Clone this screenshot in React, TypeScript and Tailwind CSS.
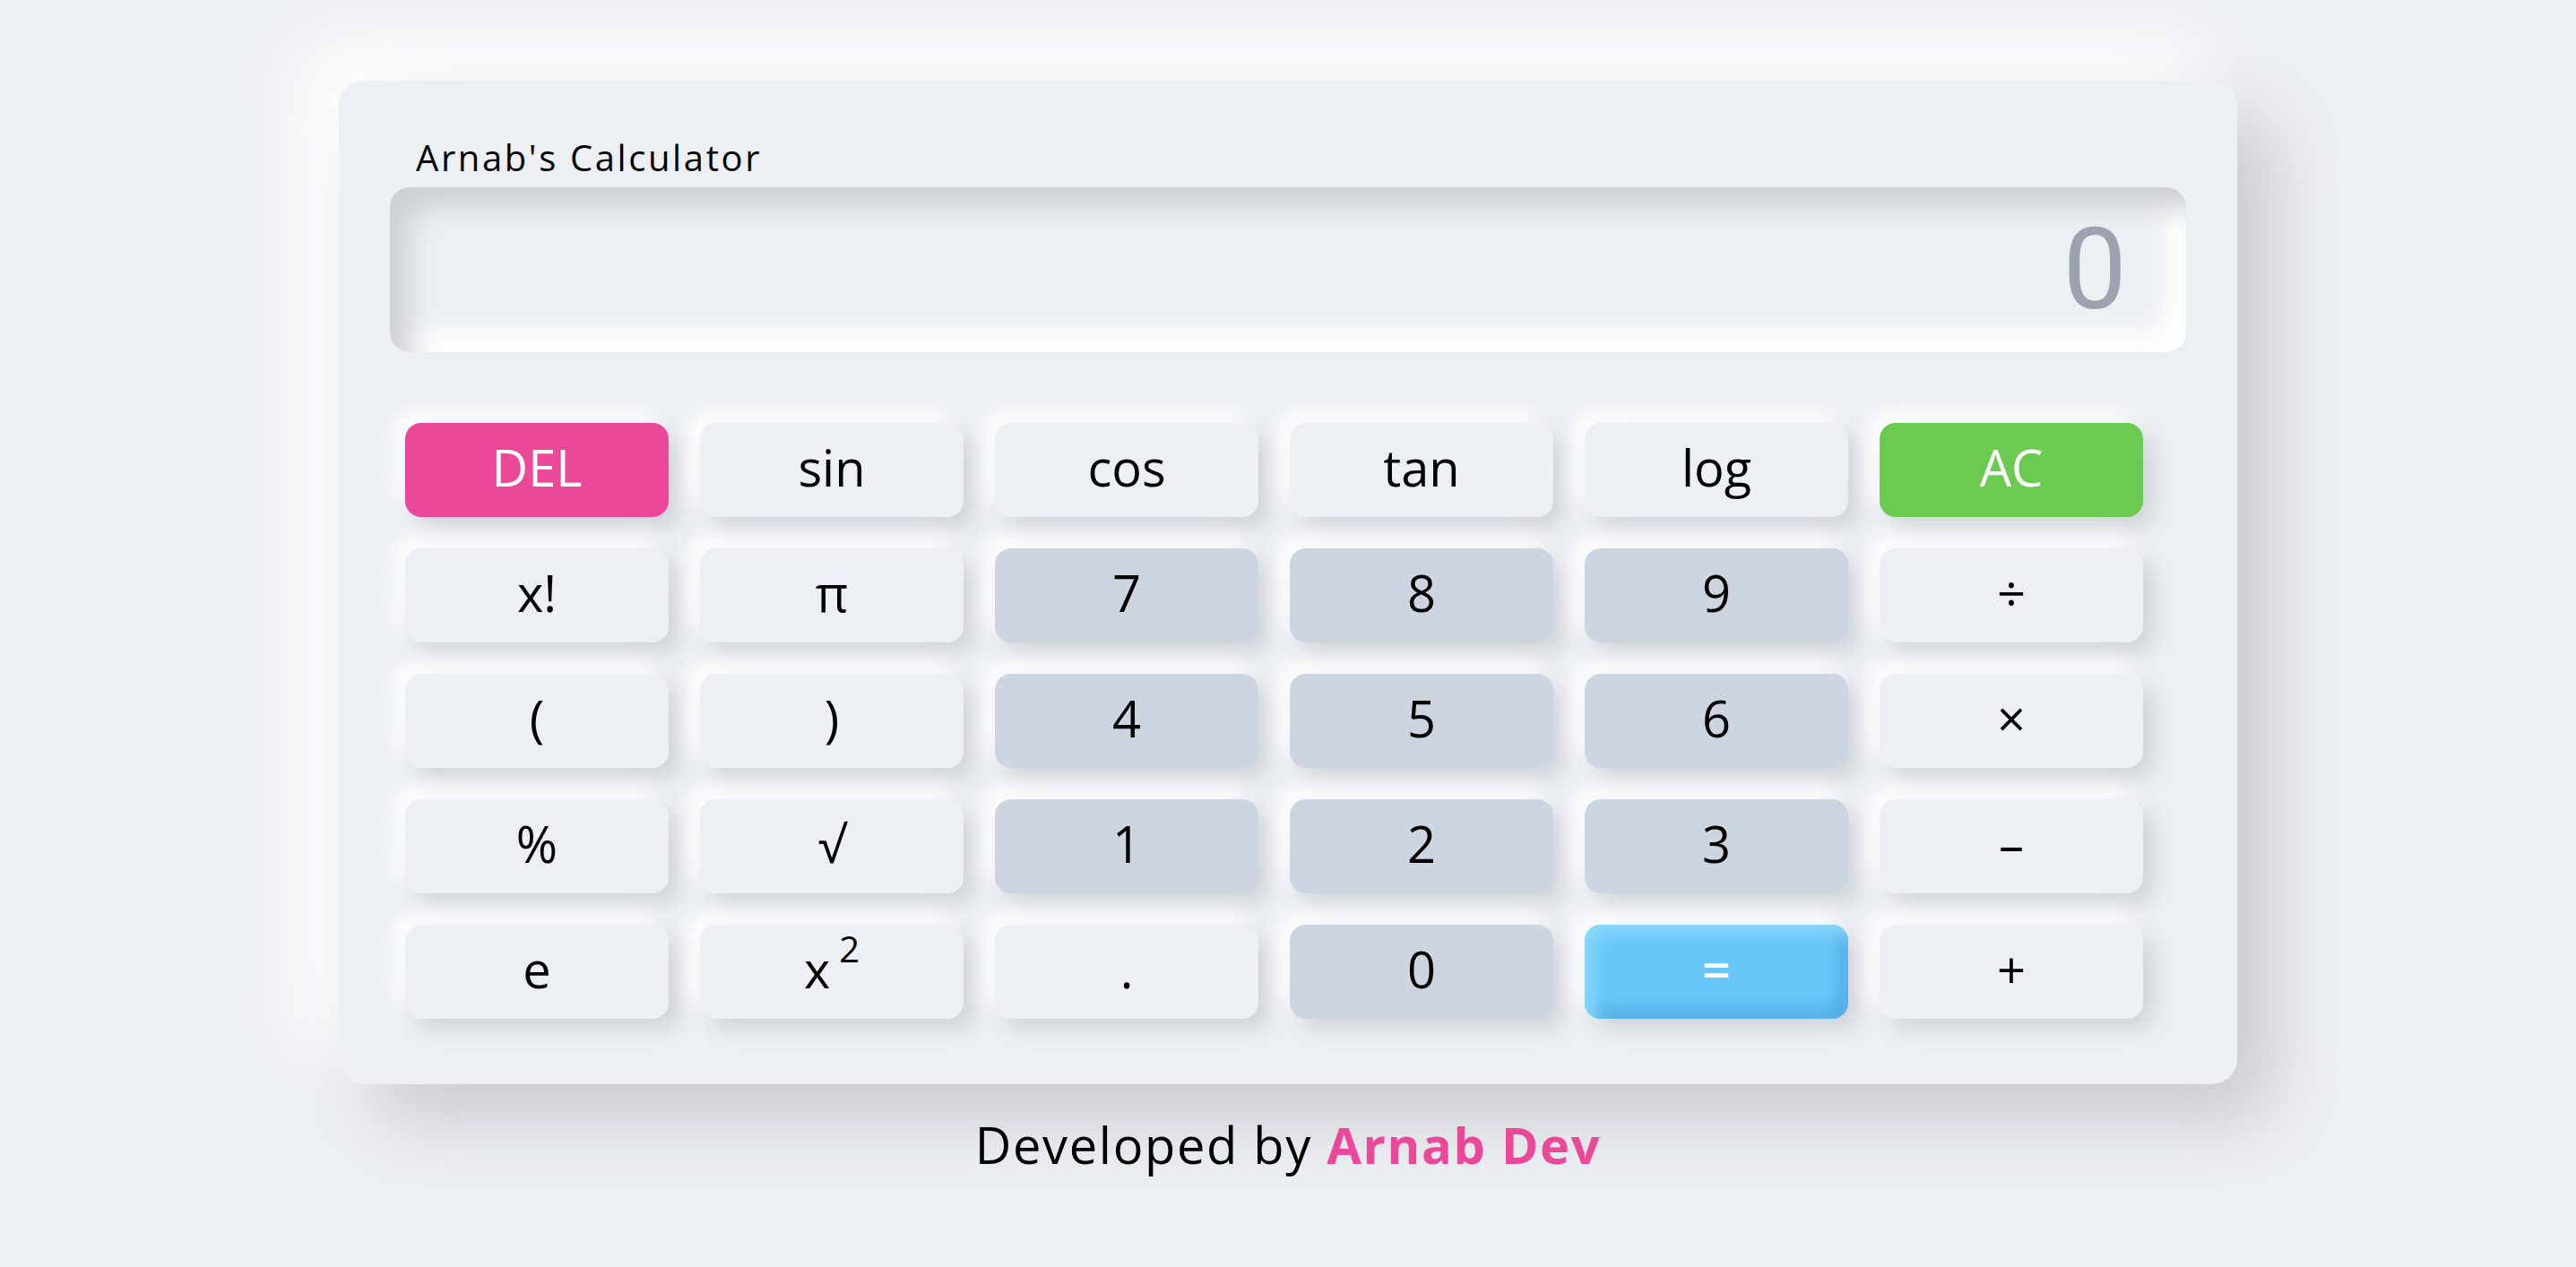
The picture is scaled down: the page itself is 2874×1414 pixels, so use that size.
import type { ReactNode } from 'react';

type Kind = 'plain' | 'digit' | 'del' | 'ac' | 'equals';

interface Key {
  label: ReactNode;
  kind: Kind;
}

const keys: Key[] = [
  { label: 'DEL', kind: 'del' },
  { label: 'sin', kind: 'plain' },
  { label: 'cos', kind: 'plain' },
  { label: 'tan', kind: 'plain' },
  { label: 'log', kind: 'plain' },
  { label: 'AC', kind: 'ac' },

  { label: 'x!', kind: 'plain' },
  { label: 'π', kind: 'plain' },
  { label: '7', kind: 'digit' },
  { label: '8', kind: 'digit' },
  { label: '9', kind: 'digit' },
  { label: '÷', kind: 'plain' },

  { label: '(', kind: 'plain' },
  { label: ')', kind: 'plain' },
  { label: '4', kind: 'digit' },
  { label: '5', kind: 'digit' },
  { label: '6', kind: 'digit' },
  { label: '×', kind: 'plain' },

  { label: '%', kind: 'plain' },
  { label: '√', kind: 'plain' },
  { label: '1', kind: 'digit' },
  { label: '2', kind: 'digit' },
  { label: '3', kind: 'digit' },
  { label: '–', kind: 'plain' },

  { label: 'e', kind: 'plain' },
  {
    label: (
      <span className="flex items-start">
        x<span className="ml-[10px] -mt-[14px] text-[40px]">2</span>
      </span>
    ),
    kind: 'plain',
  },
  { label: '.', kind: 'plain' },
  { label: '0', kind: 'digit' },
  { label: '=', kind: 'equals' },
  { label: '+', kind: 'plain' },
];

const kindClass: Record<Kind, string> = {
  plain:
    'bg-[#eceff3] text-black shadow-[12px_12px_24px_#d0d3d8,-12px_-12px_24px_#ffffff]',
  digit:
    'bg-[#cdd5e0] text-black shadow-[12px_12px_24px_#d0d3d8,-12px_-12px_24px_#ffffff]',
  del: 'bg-[#ec4899] text-white shadow-[12px_12px_24px_#d0d3d8,-12px_-12px_24px_#ffffff]',
  ac: 'bg-[#6acb50] text-white shadow-[12px_12px_24px_#d0d3d8,-12px_-12px_24px_#ffffff]',
  equals:
    'bg-[#66c7f9] text-white font-semibold shadow-[inset_10px_10px_18px_#8bd8fd,inset_-10px_-10px_18px_#52ade2,12px_12px_24px_#d0d3d8,-12px_-12px_24px_#ffffff]',
};

function CalcKey({ item }: { item: Key }) {
  return (
    <button
      className={`flex items-center justify-center w-[294px] h-[105px] pb-[7px] rounded-[18px] text-[56px] leading-none ${kindClass[item.kind]}`}
    >
      {item.label}
    </button>
  );
}

export default function App() {
  return (
    <div className="min-h-screen bg-[#edf0f3] flex flex-col items-center pt-[90px] font-['Open_Sans',sans-serif]">
      <div className="w-[2118px] h-[1120px] rounded-[28px] bg-[#ecf0f3] px-[57px] pt-[66px] shadow-[40px_40px_80px_#c9cbd0,-40px_-40px_80px_#ffffff]">
        <h1 className="ml-[29px] text-[40px] leading-[40px] tracking-[0.065em] text-black">
          Arnab's Calculator
        </h1>

        <div className="mt-[13px] h-[184px] rounded-[22px] bg-[#ecf0f3] flex items-center justify-end pr-[66px] shadow-[inset_22px_22px_30px_#cdd0d4,inset_-22px_-22px_30px_#ffffff]">
          <span className="font-['Roboto',sans-serif] text-[127px] leading-none text-[#9ca3af] mb-[2px]">
            0
          </span>
        </div>

        <div className="mt-[79px] ml-[17px] grid grid-cols-[repeat(6,294px)] gap-x-[35px] gap-y-[35px]">
          {keys.map((k, i) => (
            <CalcKey key={i} item={k} />
          ))}
        </div>
      </div>

      <p className="mt-[39px] text-[56px] leading-[56px] tracking-[0.03em] text-black">
        Developed by <span className="font-bold text-[#ec4899]">Arnab Dev</span>
      </p>
    </div>
  );
}
